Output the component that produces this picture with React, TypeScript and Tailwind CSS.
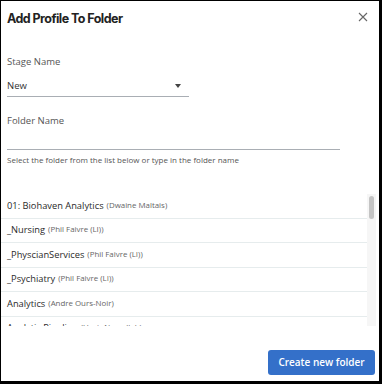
const folders = [
  { name: "01: Biohaven Analytics", owner: "Dwaine Maltais" },
  { name: "_Nursing", owner: "Phil Faivre (LI)" },
  { name: "_PhyscianServices", owner: "Phil Faivre (LI)" },
  { name: "_Psychiatry", owner: "Phil Faivre (LI)" },
  { name: "Analytics", owner: "Andre Ours-Noir" },
  { name: "Analytic Pipeline", owner: "Uzair Nasrullah" },
  { name: "Behavioral Health", owner: "Phil Faivre (LI)" },
];

export default function App() {
  return (
    <div className="h-[384px] w-[382px] border-b-[3px] border-l border-r-[3px] border-t border-black bg-white font-['Open_Sans',sans-serif] text-[#333]">
      <div className="flex h-full flex-col">
        {/* Header */}
        <div className="flex items-center justify-between pl-[6px] pr-[11px] pt-[8px]">
          <h1 className="font-['Inter',sans-serif] text-[12.5px] font-bold leading-[20px] tracking-[-0.55px] text-[#222]">
            Add Profile To Folder
          </h1>
          <svg width="10" height="10" viewBox="0 0 10 10" className="mb-[4px]">
            <path d="M1 1L9 9M9 1L1 9" stroke="#666" strokeWidth="1.1" />
          </svg>
        </div>

        {/* Stage */}
        <div className="mt-[26px] px-[6px]">
          <p className="text-[9.5px] leading-[14px] text-[#555]">Stage Name</p>
          <div className="mt-[10px] flex w-[182px] items-center justify-between border-b border-[#a9aeb4] pb-[3px] pr-[8px]">
            <span className="text-[9.5px] leading-[14px] text-[#333]">New</span>
            <svg width="6" height="4" viewBox="0 0 6 4">
              <path d="M0 0H6L3 4Z" fill="#444" />
            </svg>
          </div>
        </div>

        {/* Folder name */}
        <div className="mt-[17px] px-[6px]">
          <p className="text-[9.5px] leading-[14px] text-[#555]">Folder Name</p>
          <div className="mt-[21px] w-[333px] border-b border-[#a9aeb4]" />
          <p className="mt-[4px] text-[8px] leading-[12px] text-[#555]">
            Select the folder from the list below or type in the folder name
          </p>
        </div>

        {/* Folder list */}
        <div className="mt-[28px] flex h-[132px] pr-[3px]">
          <div className="flex-1 overflow-hidden">
            {folders.map((f) => (
              <div
                key={f.name}
                className="flex h-[24.5px] items-center border-b border-[#e6eced] pl-[6px]"
              >
                <span className="text-[9.3px] text-[#2a2a2a]">{f.name}</span>
                <span className="ml-[3px] text-[7.9px] text-[#666]">({f.owner})</span>
              </div>
            ))}
          </div>
          <div className="w-[9px] bg-[#f6f6f6] px-[2px] pt-[2px]">
            <div className="h-[23px] rounded-full bg-[#c4c4c4]" />
          </div>
        </div>

        {/* Footer */}
        <div className="mt-auto flex justify-end pb-[6px] pr-[4px]">
          <button className="h-[25px] w-[107px] rounded-[3px] bg-[#3470c9] text-[10px] font-semibold text-white">
            Create new folder
          </button>
        </div>
      </div>
    </div>
  );
}
